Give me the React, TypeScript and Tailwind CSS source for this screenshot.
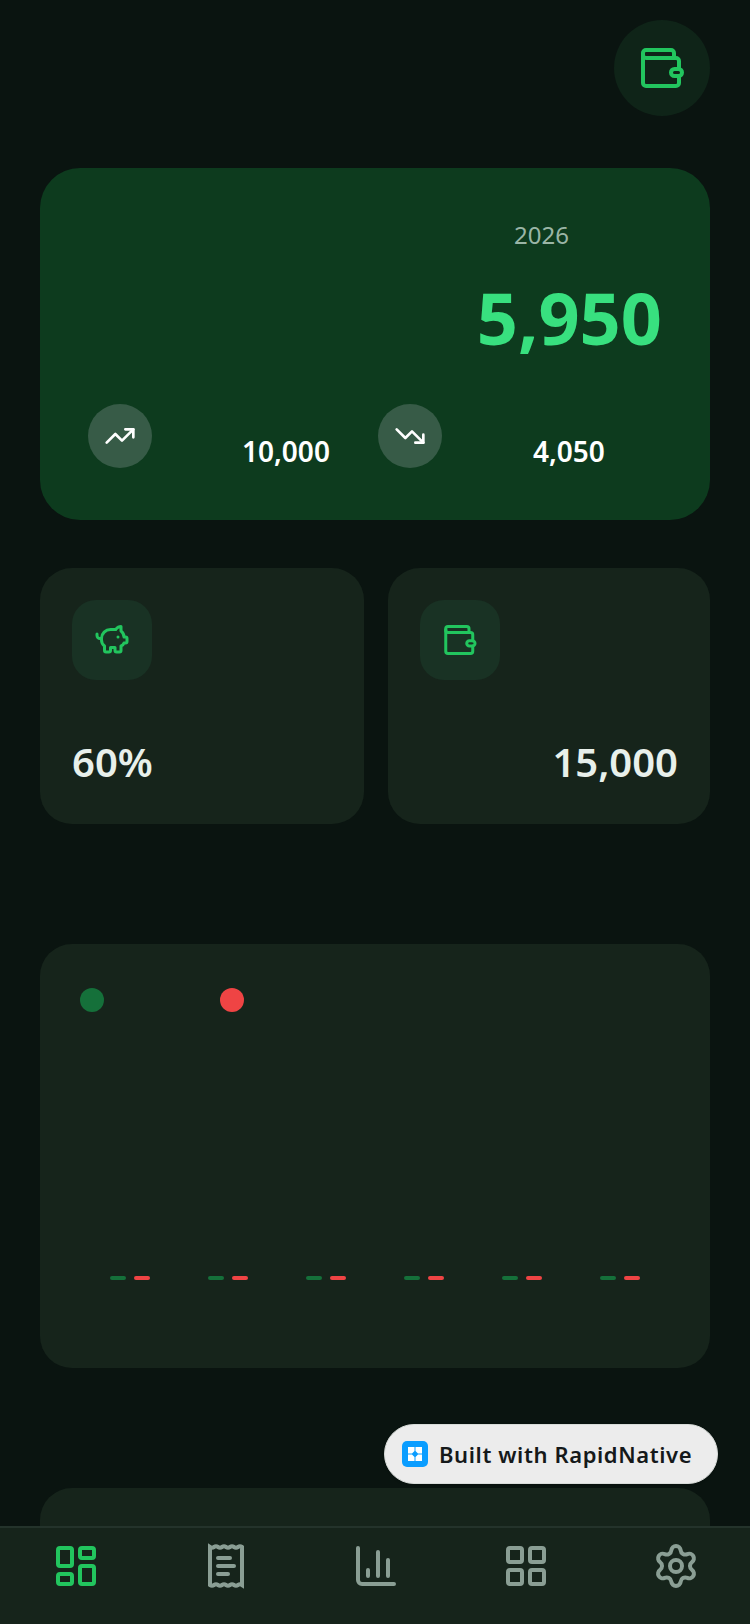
import { LayoutDashboard, ChartColumn, LayoutGrid, Settings, TrendingUp, TrendingDown, PiggyBank } from "lucide-react"

function WalletIcon({ size }: { size: string }) {
  return (
    <svg viewBox="0 0 48 48" fill="none" stroke="#22c55e" strokeWidth={4} strokeLinecap="round" strokeLinejoin="round" className={size}>
      <path d="M41 25V17a3 3 0 0 0-3-3H8a3 3 0 0 1-3-3V9a3 3 0 0 1 3-3h25a3 3 0 0 1 3 3v5" />
      <path d="M5 10v29a3 3 0 0 0 3 3h30a3 3 0 0 0 3-3v-7" />
      <rect x="33" y="25" width="11" height="7" rx="3.5" />
    </svg>
  )
}

function ReceiptIcon() {
  return (
    <svg viewBox="0 0 24 24" fill="none" stroke="#8a9e94" strokeWidth={2} strokeLinecap="round" className="h-12 w-12">
      <path strokeLinejoin="miter" d="M4 2.5q1 .7 2 0t2 0 2 0 2 0 2 0 2 0 2 0 2 0V21.5q-1-.7-2 0t-2 0-2 0-2 0-2 0-2 0-2 0-2 0Z" />
      <path d="M14 8H8M16 12H8M13 16H8" />
    </svg>
  )
}

const months = [1, 2, 3, 4, 5, 6]

export default function App() {
  return (
    <div className="relative flex flex-col h-[1624px] w-[750px] overflow-hidden bg-[#0a1410] font-['Noto_Sans',sans-serif]">
      <main className="flex-1 overflow-hidden px-10 pt-5">
        <div className="flex justify-end">
          <div className="flex h-24 w-24 items-center justify-center rounded-full bg-[#0f2418]">
            <WalletIcon size="w-12 h-12" />
          </div>
        </div>

        <section className="mt-[52px] h-[352px] rounded-[40px] bg-[#0d3b1e] px-12 pt-[51px]">
          <p className="mr-[93px] text-right text-2xl leading-[32px] text-[#9ab5a6]">2026</p>
          <p className="mt-[17px] text-right text-[72px] leading-[98px] font-bold text-[#38e07f]">5,950</p>
          <div className="mt-[38px] flex">
            <div className="flex w-[290px]">
              <div className="flex h-16 w-16 items-center justify-center rounded-full bg-[#375b47]">
                <TrendingUp size={32} color="#ffffff" strokeWidth={2} />
              </div>
              <span className="ml-[90px] mt-[27px] text-[28px] leading-[40px] font-semibold text-white">10,000</span>
            </div>
            <div className="flex">
              <div className="flex h-16 w-16 items-center justify-center rounded-full bg-[#375b47]">
                <TrendingDown size={32} color="#ffffff" strokeWidth={2} />
              </div>
              <span className="ml-[91px] mt-[27px] text-[28px] leading-[40px] font-semibold text-white">4,050</span>
            </div>
          </div>
        </section>

        <div className="mt-12 flex gap-6">
          <div className="h-64 w-[324px] rounded-[32px] bg-[#16241b] p-8">
            <div className="flex h-20 w-20 items-center justify-center rounded-3xl bg-[#193224]">
              <PiggyBank size={36} color="#22c55e" strokeWidth={2} />
            </div>
            <p className="mt-[54px] text-[40px] leading-[56px] font-semibold text-[#e8f0eb]">60%</p>
          </div>
          <div className="h-64 flex-1 rounded-[32px] bg-[#16241b] p-8">
            <div className="flex h-20 w-20 items-center justify-center rounded-3xl bg-[#193224]">
              <WalletIcon size="w-9 h-9" />
            </div>
            <p className="mt-[54px] text-right text-[40px] leading-[56px] font-semibold text-[#e8f0eb]">15,000</p>
          </div>
        </div>

        <section className="mt-[120px] h-[424px] rounded-[32px] bg-[#16241b] pl-10 pt-11">
          <div className="flex">
            <div className="h-6 w-6 rounded-full bg-[#15703a]" />
            <div className="ml-[116px] h-6 w-6 rounded-full bg-[#ef4444]" />
          </div>
          <div className="ml-[30px] mt-[264px] flex gap-[58px]">
            {months.map((m) => (
              <div key={m} className="flex gap-2">
                <div className="h-1 w-4 rounded-full bg-[#15703a]" />
                <div className="h-1 w-4 rounded-full bg-[#ef4444]" />
              </div>
            ))}
          </div>
        </section>

        <section className="mt-[120px] h-40 rounded-[32px] bg-[#16241b]" />
      </main>

      <nav className="grid h-[98px] grid-cols-5 border-t-2 border-[#24332b] bg-[#16241b] pt-[14px]">
        <div className="flex justify-center pl-[2px]"><LayoutDashboard size={48} color="#22c55e" strokeWidth={2} /></div>
        <div className="flex justify-center pl-[2px]"><ReceiptIcon /></div>
        <div className="flex justify-center pl-[2px]"><ChartColumn size={48} color="#8a9e94" strokeWidth={2} /></div>
        <div className="flex justify-center pl-[2px]"><LayoutGrid size={48} color="#8a9e94" strokeWidth={2} /></div>
        <div className="flex justify-center pl-[2px]"><Settings size={48} color="#8a9e94" strokeWidth={2} /></div>
      </nav>

      <div className="absolute left-[384px] top-[1424px] flex h-[60px] w-[334px] items-center rounded-full border border-[#d8dcd9] bg-[#ececec] pl-[17px] shadow-sm">
        <svg viewBox="0 0 26 26" className="h-[26px] w-[26px]">
          <rect width="26" height="26" rx="5" fill="#0a9dff" />
          <path d="M6 6h6.5v4l-2.5 2.5H6zM13.5 6H20v6.5h-4l-2.5-2.5zM6 13.5h4l2.5 2.5v4H6zM16 13.5h4V20h-6.5v-4z" fill="#ffffff" />
        </svg>
        <span className="ml-[11px] text-[22px] leading-[30px] font-semibold tracking-[0.6px] text-[#15191a]">Built with RapidNative</span>
      </div>
    </div>
  )
}
